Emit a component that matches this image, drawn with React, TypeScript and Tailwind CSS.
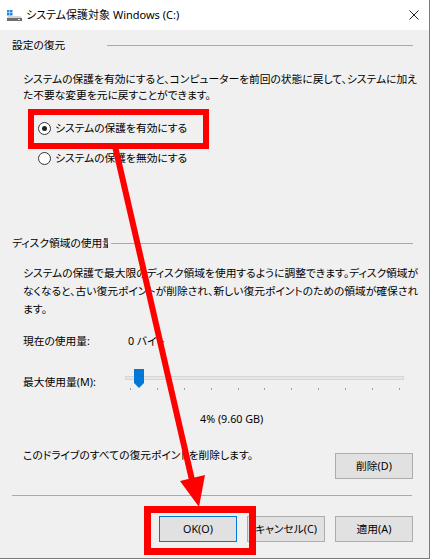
import React from 'react';

const ticks = Array.from({ length: 11 }, (_, i) => i);

function DriveIcon() {
  return (
    <svg width="17" height="14" viewBox="0 0 17 14" className="ml-[6px] shrink-0">
      <rect x="1" y="2" width="2.5" height="2.5" fill="#1e88e5" />
      <rect x="4" y="2" width="2.5" height="2.5" fill="#1e88e5" />
      <rect x="1" y="5" width="2.5" height="2.5" fill="#1e88e5" />
      <rect x="4" y="5" width="2.5" height="2.5" fill="#1e88e5" />
      <polygon points="2,8 14,8 16,10 1,10" fill="#d4d4d4" />
      <rect x="1" y="10" width="15" height="3" fill="#6d6d6d" />
      <rect x="12" y="11" width="2" height="1" fill="#e8e8e8" />
    </svg>
  );
}

function Radio({ checked, label }: { checked?: boolean; label: string }) {
  return (
    <div className="h-[20px] pl-[38px] flex items-center">
      <div className="w-[13px] h-[13px] rounded-full border border-[#333333] bg-white flex items-center justify-center shrink-0">
        {checked && <div className="w-[5px] h-[5px] rounded-full bg-[#222222]" />}
      </div>
      <span className="ml-[4px]">{label}</span>
    </div>
  );
}

function Btn({ label, primary }: { label: string; primary?: boolean }) {
  return (
    <div
      className={
        primary
          ? 'w-[78px] h-[26px] bg-[#e1e1e1] border border-[#0078d7] flex items-center justify-center'
          : 'w-[78px] h-[26px] bg-[#e1e1e1] border border-[#adadad] flex items-center justify-center'
      }
    >
      {label}
    </div>
  );
}

export default function App() {
  return (
    <div className="w-[431px] h-[560px] bg-white relative overflow-hidden text-[10.75px] text-black font-['Noto_Sans','Noto_Sans_CJK_JP',sans-serif] [font-feature-settings:'palt']">
      <div className="w-[430px] h-[559px] border-r border-b border-[#7a7a7a] bg-[#f0f0f0] flex flex-col">
        {/* title bar */}
        <div className="h-[30px] bg-white flex items-center shrink-0">
          <DriveIcon />
          <span className="ml-[3px] text-[11px]">システム保護対象 Windows (C:)</span>
          <svg width="10" height="10" viewBox="0 0 10 10" className="ml-auto mr-[10px]">
            <path d="M0.5 0.5 L9.5 9.5 M9.5 0.5 L0.5 9.5" stroke="#222" strokeWidth="1" />
          </svg>
        </div>

        {/* 設定の復元 */}
        <div className="h-[14px] mt-[8px] pl-[12px] flex items-center">
          <span className="w-[95px]">設定の復元</span>
          <div className="w-[306px] h-px bg-[#a9a9a9]" />
        </div>
        <p className="mt-[19px] pl-[23px] leading-[16px] whitespace-nowrap">
          システムの保護を有効にすると、コンピューターを前回の状態に戻して、システムに加え
          <br />
          た不要な変更を元に戻すことができます。
        </p>
        <div className="mt-[15px]">
          <Radio checked label="システムの保護を有効にする" />
        </div>
        <div className="mt-[10px]">
          <Radio label="システムの保護を無効にする" />
        </div>

        {/* ディスク領域の使用量 */}
        <div className="h-[14px] mt-[68px] pl-[12px] flex items-center">
          <span className="w-[96px] overflow-hidden whitespace-nowrap">ディスク領域の使用量</span>
          <div className="ml-[3px] w-[302px] h-px bg-[#a9a9a9]" />
        </div>
        <p className="mt-[14px] pl-[23px] leading-[18px] whitespace-nowrap">
          システムの保護で最大限のディスク領域を使用するように調整できます。ディスク領域が
          <br />
          なくなると、古い復元ポイントが削除され、新しい復元ポイントのための領域が確保され
          <br />
          ます。
        </p>
        <div className="mt-[15px] h-[16px] pl-[23px] flex items-center">
          <span className="w-[105px]">現在の使用量:</span>
          <span>0 バイト</span>
        </div>

        <div className="mt-[21px] h-[24px] pl-[23px] flex items-center">
          <span className="w-[102px]">最大使用量(M):</span>
          <div className="relative w-[279px] h-[24px]">
            <div className="mt-[6px] h-[4px] bg-[#e7e7e7] border border-[#d6d6d6]" />
            <div className="mt-[8px] pl-[5px] pr-[4px] flex justify-between">
              {ticks.map(t => (
                <div key={t} className="w-px h-[2px] bg-[#a0a0a0]" />
              ))}
            </div>
            <svg width="10" height="19" viewBox="0 0 10 19" className="absolute left-[9px] top-[-1px]">
              <polygon points="0,0 10,0 10,14 5,19 0,14" fill="#0078d7" />
            </svg>
          </div>
        </div>

        <div className="mt-[17px] h-[16px] pl-[200px] flex items-center">4% (9.60 GB)</div>

        <div className="mt-[20px] h-[32px] pl-[23px] pr-[16px] flex items-start">
          <span className="leading-[16px]">このドライブのすべての復元ポイントを削除します。</span>
          <div className="ml-auto mt-[6px]">
            <Btn label="削除(D)" />
          </div>
        </div>

        <div className="mt-[16px] ml-[12px] w-[400px] h-px bg-[#a9a9a9]" />

        <div className="mt-[20px] pr-[16px] flex justify-end gap-[10px]">
          <Btn label="OK(O)" primary />
          <Btn label="キャンセル(C)" />
          <Btn label="適用(A)" />
        </div>
      </div>

      {/* red annotations */}
      <svg width="431" height="560" viewBox="0 0 431 560" className="absolute inset-0 pointer-events-none">
        <rect x="31" y="112" width="175" height="34" fill="none" stroke="#ff0000" strokeWidth="6" />
        <rect x="147.5" y="509.5" width="105" height="42" fill="none" stroke="#ff0000" strokeWidth="7" />
        <line x1="115" y1="146" x2="192" y2="480" stroke="#ff0000" strokeWidth="6" />
        <polygon points="180,481 205,475 199,507" fill="#ff0000" />
      </svg>
    </div>
  );
}
